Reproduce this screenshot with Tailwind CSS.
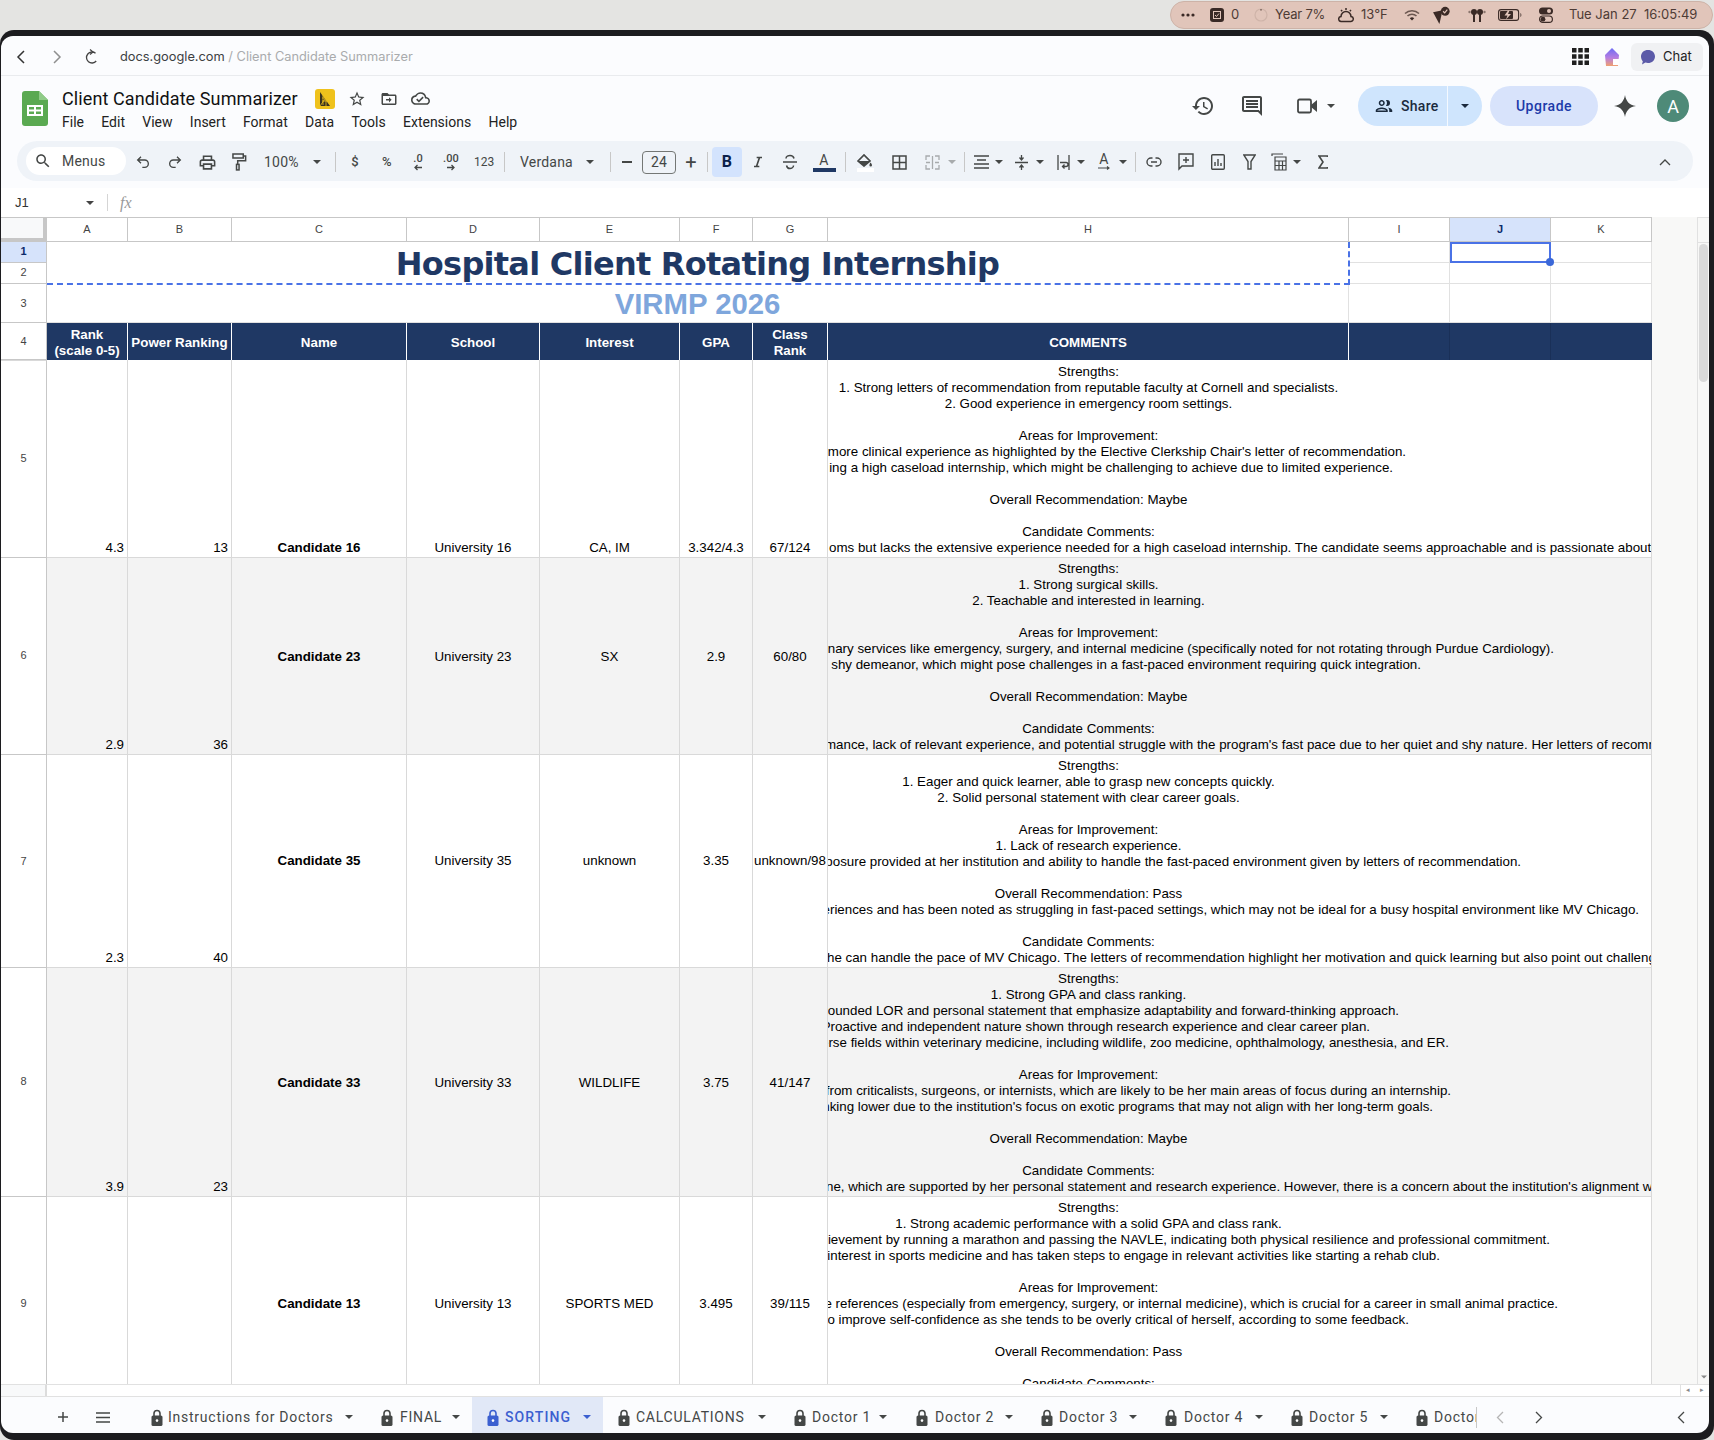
<!DOCTYPE html>
<html lang="en">
<head>
<meta charset="utf-8">
<title>Client Candidate Summarizer</title>
<script src="https://cdn.jsdelivr.net/npm/@tailwindcss/browser@4"></script>
</head>
<body class="w-[1714px] h-[1440px] overflow-hidden bg-[#e4e4e2] flex flex-col [font-family:'Liberation_Sans',Arial,sans-serif]">
<svg class="absolute w-0 h-0" aria-hidden="true">
  <symbol id="caret" viewBox="0 0 8 4"><path d="M0 0h8L4 4z" fill="currentColor"/></symbol>
  <symbol id="lock" viewBox="0 0 12 17"><path d="M3 7V4.500a3 3 0 0 1 6 0V7" fill="none" stroke="currentColor" stroke-width="1.600"/><rect x="0.500" y="6.500" width="11" height="10.500" rx="1.600" fill="currentColor"/><circle cx="6" cy="11.600" r="1.300" fill="#fff"/></symbol>
</svg>

<!-- macOS menu bar -->
<div class="h-[30px] shrink-0 flex justify-end">
  <div class="w-[543px] h-[28px] mt-[1px] mr-[1px] rounded-full bg-[#e1c5ba] border border-[#cdb3a8] flex items-center pl-[10px] text-[13px] text-[#4d3b35] [font-family:Inter,sans-serif] whitespace-nowrap">
    <svg class="w-[14px] h-[4px]" viewBox="0 0 14 4"><circle cx="2" cy="2" r="1.600" fill="#3a2a26"/><circle cx="7" cy="2" r="1.600" fill="#3a2a26"/><circle cx="12" cy="2" r="1.600" fill="#3a2a26"/></svg>
    <svg class="w-[14px] h-[14px] ml-[15px]" viewBox="0 0 14 14"><rect width="14" height="14" rx="3" fill="#3a2a26"/><rect x="3.500" y="3.500" width="7" height="7" fill="none" stroke="#e1c5ba"/><path d="M5 7l1.500 1.500L9 5.500" fill="none" stroke="#e1c5ba"/></svg>
    <span class="w-[9px] ml-[7px]">0</span>
    <svg class="w-[14px] h-[14px] ml-[14px]" viewBox="0 0 14 14"><circle cx="7" cy="7" r="6" fill="none" stroke="#cfb4a9" stroke-width="1.200"/><path d="M7 1v1.600" stroke="#4d3b35"/></svg>
    <span class="w-[49px] ml-[7px] tracking-[-0.2px]">Year 7%</span>
    <svg class="w-[16px] h-[16px] ml-[14px]" viewBox="0 0 16 16"><path d="M3.500 14.500h9a2.500 2.500 0 0 0 .5-5A5 5 0 0 0 3 9.500a2.500 2.500 0 0 0 .5 5zM8 1v2M3 3l1.200 1.200M13 3l-1.200 1.200" fill="none" stroke="#3a2a26" stroke-width="1.500"/></svg>
    <span class="w-[27px] ml-[7px]">13°F</span>
    <svg class="w-[16px] h-[12px] ml-[16px]" viewBox="0 0 16 12"><path d="M1 4.500a10 10 0 0 1 14 0M3.500 7a6.500 6.500 0 0 1 9 0" fill="none" stroke="#6b5750" stroke-width="1.500"/><path d="M5.800 9.200a3.200 3.200 0 0 1 4.400 0L8 11.500z" fill="#3a2a26"/></svg>
    <svg class="w-[19px] h-[19px] ml-[12px]" viewBox="0 0 18 18"><path d="M1 6l9-2-3 13z" fill="#3a2a26"/><circle cx="12.500" cy="5" r="4.200" fill="#3a2a26"/><path d="M10.500 5l1.500 1.500 2.500-3" fill="none" stroke="#e1c5ba" stroke-width="1.100"/></svg>
    <svg class="w-[18px] h-[14px] ml-[17px]" viewBox="0 0 18 14"><circle cx="6" cy="4" r="3" fill="#3a2a26"/><rect x="5" y="4" width="2" height="10" fill="#3a2a26"/><circle cx="12" cy="4" r="3" fill="#3a2a26"/><rect x="11" y="4" width="2" height="10" fill="#3a2a26"/><circle cx="1.500" cy="4" r="1.200" fill="#8a756d"/><circle cx="16.500" cy="4" r="1.200" fill="#8a756d"/></svg>
    <svg class="w-[24px] h-[12px] ml-[12px]" viewBox="0 0 24 12"><rect x="0.600" y="0.600" width="20" height="10.800" rx="2.500" fill="none" stroke="#3a2a26" stroke-width="1.100"/><rect x="2" y="2" width="13" height="8" rx="1" fill="#3a2a26"/><path d="M10 1.500L6.500 6.500h3L8 10.500l5-5.500h-3l1.500-3.500z" fill="#e1c5ba"/><path d="M22 4v4c1-.3 1.600-1 1.600-2S23 4.300 22 4z" fill="#8a756d"/></svg>
    <svg class="w-[14px] h-[16px] ml-[17px]" viewBox="0 0 14 16"><rect y="0.500" width="14" height="7" rx="3.500" fill="#3a2a26"/><circle cx="10" cy="4" r="2" fill="#e1c5ba"/><rect x="0.600" y="9" width="12.800" height="6.400" rx="3.200" fill="none" stroke="#3a2a26" stroke-width="1.200"/><circle cx="4" cy="12.200" r="2.400" fill="#3a2a26"/></svg>
    <span class="w-[66px] ml-[16px]">Tue Jan 27</span>
    <span class="ml-[9px]">16:05:49</span>
  </div>
</div>

<!-- window frame -->
<div class="flex-1 min-h-0 bg-[#1c1c1f] rounded-[14px] pt-[6px] pl-[1px] pr-[5px] pb-[7px]">
  <div class="h-full rounded-[12px] overflow-hidden bg-[#fbfcfe] flex flex-col text-[#1f1f1f]">

    <!-- browser bar -->
    <div class="h-[40px] pt-[2px] shrink-0 border-b border-[#e9ebee] flex items-center">
      <svg class="w-[10px] h-[14px] ml-[15px]" viewBox="0 0 10 14"><path d="M8 1L2 7l6 6" fill="none" stroke="#333" stroke-width="1.500"/></svg>
      <svg class="w-[10px] h-[14px] ml-[26px]" viewBox="0 0 10 14"><path d="M2 1l6 6-6 6" fill="none" stroke="#8f8f8f" stroke-width="1.500"/></svg>
      <svg class="w-[14px] h-[16px] ml-[23px]" viewBox="0 0 14 16"><path d="M7 3a5.500 5.500 0 1 0 5.500 5.500" fill="none" stroke="#444" stroke-width="1.300" transform="rotate(40 7 8.500)"/><path d="M5 .5l3 2.500-3 2.500" fill="none" stroke="#444" stroke-width="1.200"/></svg>
      <div class="ml-[21px] text-[12.8px] whitespace-nowrap [font-family:Inter,sans-serif]"><span class="text-[#3c4043]">docs.google.com</span><span class="text-[#a9abad]"> / Client Candidate Summarizer</span></div>
      <svg class="w-[17px] h-[17px] ml-auto" viewBox="0 0 17 17" fill="#1f1f1f"><rect width="4.500" height="4.500"/><rect x="6.250" width="4.500" height="4.500"/><rect x="12.500" width="4.500" height="4.500"/><rect y="6.250" width="4.500" height="4.500"/><rect x="6.250" y="6.250" width="4.500" height="4.500"/><rect x="12.500" y="6.250" width="4.500" height="4.500"/><rect y="12.500" width="4.500" height="4.500"/><rect x="6.250" y="12.500" width="4.500" height="4.500"/><rect x="12.500" y="12.500" width="4.500" height="4.500"/></svg>
      <svg class="w-[16px] h-[18px] ml-[15px]" viewBox="0 0 16 18"><defs><linearGradient id="gem" x1="0" y1="0" x2="0" y2="1"><stop offset="0" stop-color="#6d6cf5"/><stop offset=".55" stop-color="#b77ee0"/><stop offset="1" stop-color="#f0a070"/></linearGradient></defs><path d="M8 0l7 7-1 11H2L1 7z" fill="url(#gem)"/><rect x="9" y="11" width="6" height="6" fill="#fff"/></svg>
      <div class="w-[72px] h-[28px] ml-[11px] mr-[6px] rounded-[6px] bg-[#f0f1f3] flex items-center pl-[9px] text-[14px] [font-family:Inter,sans-serif]">
        <svg class="w-[16px] h-[16px]" viewBox="0 0 16 16"><path d="M8 1c4 0 7 2.700 7 6.500S12 14 8 14c-.9 0-1.800-.2-2.600-.4L2 15.500l.8-3.300C1.600 11 1 9.400 1 7.500 1 3.700 4 1 8 1z" fill="#5b5aa8"/></svg>
        <span class="ml-[7px] text-[13px]">Chat</span>
      </div>
    </div>

    <!-- title row -->
    <div class="h-[65px] shrink-0 flex items-center [font-family:Roboto,sans-serif]">
      <svg class="w-[26px] h-[35px] ml-[21px]" viewBox="0 0 26 35"><path d="M3 0h14l9 9v23a3 3 0 0 1-3 3H3a3 3 0 0 1-3-3V3a3 3 0 0 1 3-3z" fill="#5aa951"/><path d="M17 0l9 9h-9z" fill="#8fcb87"/><path d="M5 14h16v11H5z" fill="#fff"/><path d="M7 16h5v2.500H7zM14 16h5v2.500h-5zM7 20.500h5V23H7zM14 20.500h5V23h-5z" fill="#5aa951"/></svg>
      <div class="ml-[14px] flex flex-col">
        <div class="flex items-center h-[24px]">
          <span class="w-[253px] text-[18px] leading-[24px] tracking-[0.1px] whitespace-nowrap text-[#111]">Client Candidate Summarizer</span>
          <svg class="w-[20px] h-[20px]" viewBox="0 0 20 20"><rect width="20" height="20" rx="3" fill="#efc21c"/><path d="M5 3l10 14H5z" fill="#3a3320"/><path d="M7 9h6M7 12h8M8 6v10M11 9v8M15 3L5 17" stroke="#efc21c" stroke-width=".8" fill="none"/></svg>
          <svg class="w-[18px] h-[18px] ml-[13px]" viewBox="0 0 24 24" fill="#444746"><path d="M22 9.240l-7.190-.62L12 2 9.190 8.630 2 9.240l5.460 4.730L5.820 21 12 17.270 18.180 21l-1.630-7.030L22 9.240zM12 15.400l-3.760 2.270 1-4.280-3.320-2.880 4.380-.38L12 6.100l1.710 4.040 4.380.38-3.320 2.880 1 4.280L12 15.400z"/></svg>
          <svg class="w-[18px] h-[18px] ml-[14px]" viewBox="0 0 24 24" fill="#444746"><path d="M20 6h-8l-2-2H4c-1.100 0-2 .9-2 2v12c0 1.100.9 2 2 2h16c1.100 0 2-.9 2-2V8c0-1.100-.9-2-2-2zm0 12H4V8h16v10zM12 9.500l3.500 3.500-3.500 3.500v-2.500H8v-2h4V9.500z"/></svg>
          <svg class="w-[19px] h-[19px] ml-[13px]" viewBox="0 0 24 24" fill="#444746"><path d="M19.350 10.040A7.490 7.490 0 0 0 12 4C9.110 4 6.600 5.640 5.350 8.040A5.994 5.994 0 0 0 0 14c0 3.310 2.690 6 6 6h13c2.760 0 5-2.240 5-5 0-2.640-2.050-4.780-4.650-4.960zM19 18H6c-2.210 0-4-1.790-4-4 0-2.050 1.530-3.760 3.560-3.970l1.070-.11.500-.95A5.469 5.469 0 0 1 12 6c2.620 0 4.880 1.860 5.390 4.430l.3 1.500 1.530.11A2.980 2.980 0 0 1 22 15c0 1.650-1.350 3-3 3zm-9-3.820l-2.090-2.090L6.500 13.500 10 17l6.010-6.010-1.410-1.410z"/></svg>
        </div>
        <div class="flex h-[18px] mt-[2px] gap-[17.3px] text-[14px] leading-[18px] text-[#222] whitespace-nowrap">
          <span>File</span><span>Edit</span><span>View</span><span>Insert</span><span>Format</span><span>Data</span><span>Tools</span><span>Extensions</span><span>Help</span>
        </div>
      </div>
      <div class="ml-auto flex items-center pr-[20px] pb-[5px]">
        <svg class="w-[24px] h-[24px]" viewBox="0 0 24 24" fill="#444746"><path d="M13 3c-4.970 0-9 4.030-9 9H1l3.890 3.890.07.14L9 12H6c0-3.870 3.130-7 7-7s7 3.130 7 7-3.130 7-7 7c-1.930 0-3.680-.79-4.940-2.060l-1.420 1.420C8.270 19.990 10.510 21 13 21c4.970 0 9-4.030 9-9s-4.030-9-9-9zm-1 5v5l4.280 2.540.72-1.210-3.500-2.080V8H12z"/></svg>
        <svg class="w-[24px] h-[24px] ml-[25px]" viewBox="0 0 24 24" fill="#444746"><path d="M21.990 4c0-1.100-.89-2-1.990-2H4c-1.100 0-2 .9-2 2v12c0 1.100.9 2 2 2h14l4 4-.01-18zM20 4v13.170L18.830 16H4V4h16zM6 12h12v2H6zm0-3h12v2H6zm0-3h12v2H6z"/></svg>
        <svg class="w-[24px] h-[24px] ml-[31px]" viewBox="0 0 24 24"><path d="M4.500 5.500h10a1.500 1.500 0 0 1 1.500 1.500v10a1.500 1.500 0 0 1-1.500 1.500h-10A1.500 1.500 0 0 1 3 17V7a1.500 1.500 0 0 1 1.500-1.500z" fill="none" stroke="#444746" stroke-width="1.800"/><path d="M22 6l-6 5v2l6 5z" fill="#444746"/></svg>
        <svg class="w-[8px] h-[4px] ml-[8px] text-[#444746]"><use href="#caret"/></svg>
        <div class="w-[124px] h-[40px] ml-[23px] rounded-full bg-[#cfe5fd] flex text-[#1b2a3d]">
          <div class="w-[90px] flex items-center pl-[17px] border-r border-[#f4f9ff]">
            <svg class="w-[18px] h-[18px]" viewBox="0 0 24 24" fill="#1b2a3d"><path d="M9 12c2.200 0 4-1.800 4-4s-1.800-4-4-4-4 1.800-4 4 1.800 4 4 4zm0-6c1.100 0 2 .9 2 2s-.9 2-2 2-2-.9-2-2 .9-2 2-2zm0 8c-2.700 0-8 1.300-8 4v2h16v-2c0-2.700-5.300-4-8-4zm-6 4c.2-.7 3.300-2 6-2s5.800 1.300 6 2H3zm13-6a4 4 0 0 0 0-8c-.5 0-1 .1-1.400.3.900 1 1.400 2.300 1.400 3.700s-.5 2.700-1.400 3.700c.4.200.9.300 1.400.3zm1 2c1.300 1 2 2.200 2 4v2h4v-2c0-2.100-3.200-3.400-6-4z"/></svg>
            <span class="ml-[8px] text-[14px] font-medium tracking-[0.3px]">Share</span>
          </div>
          <div class="flex-1 flex items-center justify-center"><svg class="w-[8px] h-[4px]"><use href="#caret"/></svg></div>
        </div>
        <div class="w-[108px] h-[40px] ml-[8px] rounded-full bg-[#d8e3fb] flex items-center justify-center text-[14px] font-medium tracking-[0.5px] text-[#1c3aa9]">Upgrade</div>
        <svg class="w-[22px] h-[22px] ml-[16px]" viewBox="0 0 22 22"><path d="M11 0c1 6 4 10 11 11-7 1-10 5-11 11-1-6-4-10-11-11 7-1 10-5 11-11z" fill="#444746"/></svg>
        <div class="w-[32px] h-[32px] ml-[21px] rounded-full bg-[#4e8a78] text-white text-[18px] flex items-center justify-center">A</div>
      </div>
    </div>

    <!-- toolbar -->
    <div class="h-[40px] pt-[2px] shrink-0 mx-[16px] rounded-full bg-[#eff3f8] flex items-center pl-[9px] text-[#444746] tracking-[0.2px] [font-family:Roboto,sans-serif] whitespace-nowrap">
      <div class="w-[100px] h-[28px] -mt-[2px] rounded-full bg-white flex items-center pl-[8px] text-[14px]">
        <svg class="w-[18px] h-[18px]" viewBox="0 0 24 24" fill="#444746"><path d="M15.500 14h-.79l-.28-.27C15.410 12.590 16 11.110 16 9.500 16 5.910 13.090 3 9.500 3S3 5.910 3 9.500 5.910 16 9.500 16c1.610 0 3.090-.59 4.230-1.570l.27.280v.79l5 4.990L20.490 19l-4.990-5zm-6 0C7.010 14 5 11.990 5 9.500S7.010 5 9.500 5 14 7.010 14 9.500 11.990 14 9.500 14z"/></svg>
        <span class="ml-[10px]">Menus</span>
      </div>
      <span class="w-[34px] flex justify-center"><svg class="w-[16px] h-[16px]" viewBox="0 0 24 24"><path d="M9 14L4 9l5-5M4 9h10.500a5.500 5.500 0 0 1 0 11H11" fill="none" stroke="#444746" stroke-width="2"/></svg></span>
      <span class="w-[29px] flex justify-center"><svg class="w-[16px] h-[16px]" viewBox="0 0 24 24"><path d="M15 14l5-5-5-5M20 9H9.500a5.500 5.500 0 0 0 0 11H13" fill="none" stroke="#444746" stroke-width="2"/></svg></span>
      <span class="w-[36px] flex justify-center"><svg class="w-[19px] h-[19px]" viewBox="0 0 24 24" fill="#444746"><path d="M19 8h-1V3H6v5H5c-1.660 0-3 1.340-3 3v6h4v4h12v-4h4v-6c0-1.660-1.340-3-3-3zM8 5h8v3H8V5zm8 12v2H8v-4h8v2zm2-2v-2H6v2H4v-4c0-.55.45-1 1-1h14c.55 0 1 .45 1 1v4h-2z"/></svg></span>
      <span class="w-[26px] flex justify-center"><svg class="w-[19px] h-[20px]" viewBox="0 0 24 24"><path d="M5 2h13v5H5zM18 4.500h3v6h-10v4" fill="none" stroke="#444746" stroke-width="1.900"/><rect x="9.500" y="15" width="3.200" height="7" fill="none" stroke="#444746" stroke-width="1.900"/></svg></span>
      <span class="w-[57px] pl-[13px] text-[14px]">100%</span>
      <span class="w-[18px] flex justify-center"><svg class="w-[8px] h-[4px]"><use href="#caret"/></svg></span>
      <span class="w-[19px] flex justify-center"><span class="w-px h-[20px] bg-[#c7c7c7]"></span></span>
      <span class="w-[20px] text-center text-[13px] font-medium">$</span>
      <span class="w-[44px] text-center text-[13px] font-medium">%</span>
      <span class="w-[18px] flex flex-col items-center text-[11px] leading-[11px] font-medium">.0<svg class="w-[10px] h-[7px]" viewBox="0 0 10 7"><path d="M9 3.500H2M4.500 1L2 3.500 4.500 6" fill="none" stroke="#444746" stroke-width="1.300"/></svg></span>
      <span class="w-[48px] flex flex-col items-center text-[11px] leading-[11px] font-medium">.00<svg class="w-[10px] h-[7px]" viewBox="0 0 10 7"><path d="M1 3.500h7M5.500 1L8 3.500 5.500 6" fill="none" stroke="#444746" stroke-width="1.300"/></svg></span>
      <span class="w-[18px] flex justify-center text-[12px] tracking-normal">123</span>
      <span class="w-[23px] flex justify-center"><span class="w-px h-[20px] bg-[#c7c7c7]"></span></span>
      <span class="w-[62px] pl-[4px] text-[14px]">Verdana</span>
      <span class="w-[24px] flex justify-center"><svg class="w-[8px] h-[4px]"><use href="#caret"/></svg></span>
      <span class="w-[16px] flex justify-center"><span class="w-px h-[20px] bg-[#c7c7c7]"></span></span>
      <span class="w-[18px] flex justify-center"><span class="w-[10px] h-[2px] bg-[#444746]"></span></span>
      <span class="w-[34px] h-[23px] ml-[6px] rounded-[4px] border border-[#747775] flex items-center justify-center text-[14px]">24</span>
      <span class="w-[30px] flex justify-center text-[20px] leading-none">+</span>
      <span class="w-[2px] flex justify-center"><span class="w-px h-[20px] shrink-0 bg-[#c7c7c7]"></span></span>
      <span class="w-[30px] h-[30px] ml-[4px] rounded-[4px] bg-[#d3e3fd] flex items-center justify-center text-[16px] font-bold text-[#0b1f4b]">B</span>
      <span class="w-[32px] flex justify-center"><svg class="w-[16px] h-[16px]" viewBox="0 0 24 24" fill="#444746"><path d="M10 4v2.500h2.600l-3.800 11H6V20h8v-2.500h-2.600l3.800-11H18V4z"/></svg></span>
      <span class="w-[32px] flex justify-center"><svg class="w-[16px] h-[16px]" viewBox="0 0 16 16"><path d="M12 4.500c-.4-2-2.500-3-4-3s-4 1-4 3M1 8h14M4.500 11.500c.4 2 2 3 3.500 3s3.500-1 3.500-3" fill="none" stroke="#444746" stroke-width="1.500"/></svg></span>
      <span class="w-[36px] flex flex-col items-center text-[14px] leading-[14px]"><span>A</span><span class="w-[23px] h-[4px] mt-[1px] bg-[#1f3864]"></span></span>
      <span class="w-[6px] flex justify-center"><span class="w-px h-[20px] shrink-0 bg-[#c7c7c7]"></span></span>
      <span class="w-[34px] flex flex-col items-center"><svg class="w-[16px] h-[14px]" viewBox="0 0 16 14"><path d="M1 8l6-6 6 6-6 5z" fill="none" stroke="#444746" stroke-width="1.700"/><path d="M1 8h12l-6 5zM13.500 9.500c1 1.300 1.500 2 1.500 2.700a1.300 1.300 0 0 1-2.600 0c0-.7.5-1.400 1.100-2.700z" fill="#444746"/></svg><span class="w-[17px] h-[4px] mt-[1px] bg-white"></span></span>
      <span class="w-[34px] flex justify-center"><svg class="w-[15px] h-[15px]" viewBox="0 0 15 15"><path d="M1 1h13v13H1zM7.500 1v13M1 7.500h13" fill="none" stroke="#444746" stroke-width="1.500"/></svg></span>
      <span class="w-[32px] flex justify-center"><svg class="w-[15px] h-[15px]" viewBox="0 0 15 15"><path d="M1 5V1h4M10 1h4v4M1 10v4h4M10 14h4v-4M1 7.500h4M14 7.500h-4M7.500 1v13" fill="none" stroke="#a8abad" stroke-width="1.300"/></svg></span>
      <span class="w-[8px] flex justify-center text-[#a8abad]"><svg class="w-[8px] h-[4px] shrink-0"><use href="#caret"/></svg></span>
      <span class="w-[16px] flex justify-center"><span class="w-px h-[20px] bg-[#c7c7c7]"></span></span>
      <span class="w-[18px] flex justify-center"><svg class="w-[15px] h-[14px] shrink-0" viewBox="0 0 15 14"><path d="M0 1h15M3 5h9M0 9h15M0 13h15" stroke="#444746" stroke-width="1.700"/></svg></span>
      <span class="w-[18px] flex justify-center"><svg class="w-[8px] h-[4px]"><use href="#caret"/></svg></span>
      <span class="w-[26px] flex justify-center"><svg class="w-[13px] h-[17px]" viewBox="0 0 13 17"><path d="M0 8.500h13M6.500 1v4M4.500 3.500l2 2.500 2-2.500M6.500 16v-4M4.500 13.500l2-2.500 2 2.500" fill="none" stroke="#444746" stroke-width="1.300"/></svg></span>
      <span class="w-[12px] flex justify-center"><svg class="w-[8px] h-[4px]"><use href="#caret"/></svg></span>
      <span class="w-[34px] flex justify-center"><svg class="w-[13px] h-[15px]" viewBox="0 0 13 15"><path d="M1 0v15M12 0v15M3 7.500h6a1.500 1.500 0 0 1 0 4H6M7.500 9.500l-2 2 2 2" fill="none" stroke="#444746" stroke-width="1.300"/></svg></span>
      <span class="w-[2px] flex justify-center"><svg class="w-[8px] h-[4px] shrink-0"><use href="#caret"/></svg></span>
      <span class="w-[36px] ml-[4px] flex flex-col items-center text-[14px] leading-[13px]">A<svg class="w-[14px] h-[5px] shrink-0" viewBox="0 0 14 5"><path d="M1 2h11M10 .5l2 1.500-2 1.500" fill="none" stroke="#444746" stroke-width="1.100"/></svg></span>
      <span class="w-[2px] flex justify-center"><svg class="w-[8px] h-[4px] shrink-0"><use href="#caret"/></svg></span>
      <span class="w-[22px] flex justify-center"><span class="w-px h-[20px] shrink-0 bg-[#c7c7c7]"></span></span>
      <span class="w-[15px] flex justify-center"><svg class="w-[16px] h-[10px] shrink-0" viewBox="0 0 16 10"><path d="M6.500 1H5a4 4 0 0 0 0 8h1.500M9.500 1H11a4 4 0 0 1 0 8H9.500M5 5h6" fill="none" stroke="#444746" stroke-width="1.400"/></svg></span>
      <span class="w-[49px] flex justify-center"><svg class="w-[16px] h-[18px] shrink-0" viewBox="0 0 16 18"><path d="M1 1h14v12H4l-3 3zM8 4v6M5 7h6" fill="none" stroke="#444746" stroke-width="1.400"/></svg></span>
      <span class="w-[16px] flex justify-center"><svg class="w-[14px] h-[16px] shrink-0" viewBox="0 0 14 16"><rect x="0.700" y="0.700" width="12.600" height="14.600" rx="1" fill="none" stroke="#444746" stroke-width="1.400"/><path d="M4 8v4M7 5v7M10 9v3" stroke="#444746" stroke-width="1.400"/></svg></span>
      <span class="w-[47px] flex justify-center"><svg class="w-[13px] h-[16px] shrink-0" viewBox="0 0 13 16"><path d="M0.800 1h11.400L8 7.500V15H5V7.500z" fill="none" stroke="#444746" stroke-width="1.400"/></svg></span>
      <span class="w-[12px] flex justify-center"><svg class="w-[16px] h-[18px] shrink-0" viewBox="0 0 16 18"><path d="M1 3V1h11M4 4h11v13H4zM4 8h11M8 8v9M11.500 8v9M4 12.500h11" fill="none" stroke="#444746" stroke-width="1.200"/></svg></span>
      <span class="w-[24px] flex justify-center"><svg class="w-[8px] h-[4px] shrink-0"><use href="#caret"/></svg></span>
      <span class="w-[28px] flex justify-center"><svg class="w-[10px] h-[14px] shrink-0" viewBox="0 0 10 14"><path d="M9.500 2V1H1l4 6-4 6h8.500v-1" fill="none" stroke="#444746" stroke-width="1.600"/></svg></span>
      <span class="ml-auto mr-[22px] flex"><svg class="w-[12px] h-[7px]" viewBox="0 0 12 7"><path d="M1 6l5-5 5 5" fill="none" stroke="#444746" stroke-width="1.300"/></svg></span>
    </div>

    <!-- formula bar -->
    <div class="h-[29px] mt-[7px] shrink-0 bg-white flex items-center text-[13px] text-[#333]">
      <span class="w-[85px] pl-[14px]">J1</span>
      <svg class="w-[8px] h-[4px] text-[#444]"><use href="#caret"/></svg>
      <span class="w-px h-[17px] ml-[13px] bg-[#d5d5d5]"></span>
      <span class="ml-[12px] italic text-[16px] text-[#999] [font-family:'Liberation_Serif',serif]">fx</span>
    </div>

    <!-- sheet -->
    <div class="h-[1167px] shrink-0 flex overflow-hidden bg-white text-[13.33px] leading-[16px] text-black">
      <div class="grid grid-cols-[46px_81px_104px_175px_133px_140px_73px_75px_521px_101px_101px_101px] grid-rows-[25px_21px_21px_39px_37px_198px_197px_213px_229px_214px] shrink-0">

        <!-- column headers -->
        <div class="bg-[#f8f9fa] border-t border-r-4 border-b-4 border-[#c7c7c7]"></div>
        <div class="border-t border-r border-b border-[#c7c7c7] flex items-center justify-center pb-[2px] text-[11px] text-[#444]">A</div>
        <div class="border-t border-r border-b border-[#c7c7c7] flex items-center justify-center pb-[2px] text-[11px] text-[#444]">B</div>
        <div class="border-t border-r border-b border-[#c7c7c7] flex items-center justify-center pb-[2px] text-[11px] text-[#444]">C</div>
        <div class="border-t border-r border-b border-[#c7c7c7] flex items-center justify-center pb-[2px] text-[11px] text-[#444]">D</div>
        <div class="border-t border-r border-b border-[#c7c7c7] flex items-center justify-center pb-[2px] text-[11px] text-[#444]">E</div>
        <div class="border-t border-r border-b border-[#c7c7c7] flex items-center justify-center pb-[2px] text-[11px] text-[#444]">F</div>
        <div class="border-t border-r border-b border-[#c7c7c7] flex items-center justify-center pb-[2px] text-[11px] text-[#444]">G</div>
        <div class="border-t border-r border-b border-[#c7c7c7] flex items-center justify-center pb-[2px] text-[11px] text-[#444]">H</div>
        <div class="border-t border-r border-b border-[#c7c7c7] flex items-center justify-center pb-[2px] text-[11px] text-[#444]">I</div>
        <div class="border-t border-r border-b border-[#c7c7c7] bg-[#d6e3fb] flex items-center justify-center pb-[2px] text-[11px] font-bold text-[#0b2a6b]">J</div>
        <div class="border-t border-r border-b border-[#c7c7c7] flex items-center justify-center pb-[2px] text-[11px] text-[#444]">K</div>

        <!-- rows 1-2 -->
        <div class="bg-[#d6e3fb] border-r border-b border-[#c7c7c7] flex items-center justify-center pb-[2px] text-[11px] font-bold text-[#0b2a6b]">1</div>
        <div class="col-span-8 row-span-2 relative z-10 -mb-px -mr-px pt-[2px] border-r-2 border-b-2 border-dashed border-[#4a72e6] flex items-center justify-center text-[#1f3864] text-[32px] font-bold [font-family:'DejaVu_Sans',sans-serif] tracking-[-0.75px] whitespace-nowrap">Hospital Client Rotating Internship</div>
        <div class="border-r border-b border-[#e1e1e1]"></div>
        <div class="relative border-2 border-[#4a72e6]"><span class="absolute -right-[5px] -bottom-[5px] w-[8px] h-[8px] rounded-full bg-[#3b68d8] z-10"></span></div>
        <div class="border-r border-b border-[#e1e1e1]"></div>

        <div class="border-r border-b border-[#c7c7c7] flex items-center justify-center pb-[2px] text-[11px] text-[#444]">2</div>
        <div class="border-r border-b border-[#e1e1e1]"></div>
        <div class="border-r border-b border-[#e1e1e1]"></div>
        <div class="border-r border-b border-[#e1e1e1]"></div>

        <!-- row 3 -->
        <div class="border-r border-b border-[#c7c7c7] flex items-center justify-center text-[11px] text-[#444]">3</div>
        <div class="col-span-8 pt-[2px] border-r border-b border-[#e1e1e1] flex items-center justify-center text-[#7ea6dc] text-[29.33px] font-bold">VIRMP 2026</div>
        <div class="border-r border-b border-[#e1e1e1]"></div>
        <div class="border-r border-b border-[#e1e1e1]"></div>
        <div class="border-r border-b border-[#e1e1e1]"></div>

        <!-- row 4 -->
        <div class="border-r border-b border-[#c7c7c7] flex items-center justify-center text-[11px] text-[#444]">4</div>
        <div class="bg-[#1f3864] pt-[2px] border-r border-white text-white font-bold flex items-center justify-center text-center">Rank<br>(scale 0-5)</div>
        <div class="bg-[#1f3864] pt-[2px] border-r border-white text-white font-bold flex items-center justify-center text-center whitespace-nowrap">Power Ranking</div>
        <div class="bg-[#1f3864] pt-[2px] border-r border-white text-white font-bold flex items-center justify-center text-center">Name</div>
        <div class="bg-[#1f3864] pt-[2px] border-r border-white text-white font-bold flex items-center justify-center text-center">School</div>
        <div class="bg-[#1f3864] pt-[2px] border-r border-white text-white font-bold flex items-center justify-center text-center">Interest</div>
        <div class="bg-[#1f3864] pt-[2px] border-r border-white text-white font-bold flex items-center justify-center text-center">GPA</div>
        <div class="bg-[#1f3864] pt-[2px] border-r border-white text-white font-bold flex items-center justify-center text-center">Class<br>Rank</div>
        <div class="bg-[#1f3864] pt-[2px] border-r border-white text-white font-bold flex items-center justify-center text-center">COMMENTS</div>
        <div class="bg-[#1f3864] border-r border-[#1a3058]"></div>
        <div class="bg-[#1f3864] border-r border-[#1a3058]"></div>
        <div class="bg-[#1f3864]"></div>

        <!-- row 5 -->
        <div class="border-t border-r border-b border-t-[#d9d9d9] border-[#c7c7c7] flex items-center justify-center pb-[2px] text-[11px] text-[#444]">5</div>
        <div class="border-r border-b border-[#d9d9d9] flex items-end justify-end pr-[3px] pb-[1px]">4.3</div>
        <div class="border-r border-b border-[#d9d9d9] flex items-end justify-end pr-[3px] pb-[1px]">13</div>
        <div class="border-r border-b border-[#d9d9d9] flex items-end justify-center pb-[1px] font-bold">Candidate 16</div>
        <div class="border-r border-b border-[#d9d9d9] flex items-end justify-center pb-[1px]">University 16</div>
        <div class="border-r border-b border-[#d9d9d9] flex items-end justify-center pb-[1px]">CA, IM</div>
        <div class="border-r border-b border-[#d9d9d9] flex items-end justify-center pb-[1px]">3.342/4.3</div>
        <div class="border-r border-b border-[#d9d9d9] flex items-end justify-center pb-[1px]">67/124</div>
        <div class="col-span-4 border-r border-b border-[#d9d9d9] overflow-hidden whitespace-nowrap pt-[4px]">
          <p class="w-[521px] text-center">Strengths:</p>
          <p class="w-[521px] flex justify-center">1. Strong letters of recommendation from reputable faculty at Cornell and specialists.</p>
          <p class="w-[521px] text-center">2. Good experience in emergency room settings.</p>
          <p class="h-[16px]"></p>
          <p class="w-[521px] text-center">Areas for Improvement:</p>
          <p class="flex justify-end pr-[245px]">Needs more clinical experience as highlighted by the Elective Clerkship Chair's letter of recommendation.</p>
          <p class="flex justify-end pr-[258px]">ing a high caseload internship, which might be challenging to achieve due to limited experience.</p>
          <p class="h-[16px]"></p>
          <p class="w-[521px] text-center">Overall Recommendation: Maybe</p>
          <p class="h-[16px]"></p>
          <p class="w-[521px] text-center">Candidate Comments:</p>
          <p class="pl-[1px]">oms but lacks the extensive experience needed for a high caseload internship. The candidate seems approachable and is passionate about</p>
        </div>

        <!-- row 6 -->
        <div class="border-r border-b border-[#c7c7c7] flex items-center justify-center pb-[2px] text-[11px] text-[#444]">6</div>
        <div class="bg-[#f3f3f3] border-r border-b border-[#d9d9d9] flex items-end justify-end pr-[3px] pb-[1px]">2.9</div>
        <div class="bg-[#f3f3f3] border-r border-b border-[#d9d9d9] flex items-end justify-end pr-[3px] pb-[1px]">36</div>
        <div class="bg-[#f3f3f3] border-r border-b border-[#d9d9d9] flex items-center justify-center pt-[2px] font-bold">Candidate 23</div>
        <div class="bg-[#f3f3f3] border-r border-b border-[#d9d9d9] flex items-center justify-center pt-[2px]">University 23</div>
        <div class="bg-[#f3f3f3] border-r border-b border-[#d9d9d9] flex items-center justify-center pt-[2px]">SX</div>
        <div class="bg-[#f3f3f3] border-r border-b border-[#d9d9d9] flex items-center justify-center pt-[2px]">2.9</div>
        <div class="bg-[#f3f3f3] border-r border-b border-[#d9d9d9] flex items-center justify-center pt-[2px]">60/80</div>
        <div class="col-span-4 bg-[#f3f3f3] border-r border-b border-[#d9d9d9] overflow-hidden whitespace-nowrap pt-[3px]">
          <p class="w-[521px] text-center">Strengths:</p>
          <p class="w-[521px] text-center">1. Strong surgical skills.</p>
          <p class="w-[521px] text-center">2. Teachable and interested in learning.</p>
          <p class="h-[16px]"></p>
          <p class="w-[521px] text-center">Areas for Improvement:</p>
          <p class="flex justify-end pr-[97px]">Limited exposure to veterinary services like emergency, surgery, and internal medicine (specifically noted for not rotating through Purdue Cardiology).</p>
          <p class="flex justify-end pr-[230px]">Quiet and shy demeanor, which might pose challenges in a fast-paced environment requiring quick integration.</p>
          <p class="h-[16px]"></p>
          <p class="w-[521px] text-center">Overall Recommendation: Maybe</p>
          <p class="h-[16px]"></p>
          <p class="w-[521px] text-center">Candidate Comments:</p>
          <p class="ml-[-3px]">mance, lack of relevant experience, and potential struggle with the program's fast pace due to her quiet and shy nature. Her letters of recommendation</p>
        </div>

        <!-- row 7 -->
        <div class="border-r border-b border-[#c7c7c7] flex items-center justify-center text-[11px] text-[#444]">7</div>
        <div class="border-r border-b border-[#d9d9d9] flex items-end justify-end pr-[3px] pb-[1px]">2.3</div>
        <div class="border-r border-b border-[#d9d9d9] flex items-end justify-end pr-[3px] pb-[1px]">40</div>
        <div class="border-r border-b border-[#d9d9d9] flex items-center justify-center font-bold">Candidate 35</div>
        <div class="border-r border-b border-[#d9d9d9] flex items-center justify-center">University 35</div>
        <div class="border-r border-b border-[#d9d9d9] flex items-center justify-center">unknown</div>
        <div class="border-r border-b border-[#d9d9d9] flex items-center justify-center">3.35</div>
        <div class="border-r border-b border-[#d9d9d9] flex items-center justify-center whitespace-nowrap">unknown/98</div>
        <div class="col-span-4 border-r border-b border-[#d9d9d9] overflow-hidden whitespace-nowrap pt-[3px]">
          <p class="w-[521px] text-center">Strengths:</p>
          <p class="w-[521px] text-center">1. Eager and quick learner, able to grasp new concepts quickly.</p>
          <p class="w-[521px] text-center">2. Solid personal statement with clear career goals.</p>
          <p class="h-[16px]"></p>
          <p class="w-[521px] text-center">Areas for Improvement:</p>
          <p class="w-[521px] text-center">1. Lack of research experience.</p>
          <p class="flex justify-end pr-[130px]">Limited exposure provided at her institution and ability to handle the fast-paced environment given by letters of recommendation.</p>
          <p class="h-[16px]"></p>
          <p class="w-[521px] text-center">Overall Recommendation: Pass</p>
          <p class="flex justify-end pr-[12px]">Limited experiences and has been noted as struggling in fast-paced settings, which may not be ideal for a busy hospital environment like MV Chicago.</p>
          <p class="h-[16px]"></p>
          <p class="w-[521px] text-center">Candidate Comments:</p>
          <p class="ml-[-1px]">he can handle the pace of MV Chicago. The letters of recommendation highlight her motivation and quick learning but also point out challenges</p>
        </div>

        <!-- row 8 -->
        <div class="border-r border-b border-[#c7c7c7] flex items-center justify-center pb-[2px] text-[11px] text-[#444]">8</div>
        <div class="bg-[#f3f3f3] border-r border-b border-[#d9d9d9] flex items-end justify-end pr-[3px] pb-[1px]">3.9</div>
        <div class="bg-[#f3f3f3] border-r border-b border-[#d9d9d9] flex items-end justify-end pr-[3px] pb-[1px]">23</div>
        <div class="bg-[#f3f3f3] border-r border-b border-[#d9d9d9] flex items-center justify-center pt-[2px] font-bold">Candidate 33</div>
        <div class="bg-[#f3f3f3] border-r border-b border-[#d9d9d9] flex items-center justify-center pt-[2px]">University 33</div>
        <div class="bg-[#f3f3f3] border-r border-b border-[#d9d9d9] flex items-center justify-center pt-[2px]">WILDLIFE</div>
        <div class="bg-[#f3f3f3] border-r border-b border-[#d9d9d9] flex items-center justify-center pt-[2px]">3.75</div>
        <div class="bg-[#f3f3f3] border-r border-b border-[#d9d9d9] flex items-center justify-center pt-[2px]">41/147</div>
        <div class="col-span-4 bg-[#f3f3f3] border-r border-b border-[#d9d9d9] overflow-hidden whitespace-nowrap pt-[3px]">
          <p class="w-[521px] text-center">Strengths:</p>
          <p class="w-[521px] text-center">1. Strong GPA and class ranking.</p>
          <p class="flex justify-end pr-[252px]">2. Well-rounded LOR and personal statement that emphasize adaptability and forward-thinking approach.</p>
          <p class="flex justify-end pr-[281px]">3. Proactive and independent nature shown through research experience and clear career plan.</p>
          <p class="flex justify-end pr-[202px]">4. Interest in diverse fields within veterinary medicine, including wildlife, zoo medicine, ophthalmology, anesthesia, and ER.</p>
          <p class="h-[16px]"></p>
          <p class="w-[521px] text-center">Areas for Improvement:</p>
          <p class="flex justify-end pr-[200px]">Limited experience from criticalists, surgeons, or internists, which are likely to be her main areas of focus during an internship.</p>
          <p class="flex justify-end pr-[218px]">Class ranking lower due to the institution's focus on exotic programs that may not align with her long-term goals.</p>
          <p class="h-[16px]"></p>
          <p class="w-[521px] text-center">Overall Recommendation: Maybe</p>
          <p class="h-[16px]"></p>
          <p class="w-[521px] text-center">Candidate Comments:</p>
          <p class="ml-[-2px]">ne, which are supported by her personal statement and research experience. However, there is a concern about the institution's alignment with</p>
        </div>

        <!-- row 9 -->
        <div class="border-r border-b border-[#c7c7c7] flex items-center justify-center pb-[2px] text-[11px] text-[#444]">9</div>
        <div class="border-r border-b border-[#d9d9d9]"></div>
        <div class="border-r border-b border-[#d9d9d9]"></div>
        <div class="border-r border-b border-[#d9d9d9] flex items-center justify-center font-bold">Candidate 13</div>
        <div class="border-r border-b border-[#d9d9d9] flex items-center justify-center">University 13</div>
        <div class="border-r border-b border-[#d9d9d9] flex items-center justify-center">SPORTS MED</div>
        <div class="border-r border-b border-[#d9d9d9] flex items-center justify-center">3.495</div>
        <div class="border-r border-b border-[#d9d9d9] flex items-center justify-center">39/115</div>
        <div class="col-span-4 border-r border-b border-[#d9d9d9] overflow-hidden whitespace-nowrap pt-[3px]">
          <p class="w-[521px] text-center">Strengths:</p>
          <p class="w-[521px] text-center">1. Strong academic performance with a solid GPA and class rank.</p>
          <p class="flex justify-end pr-[101px]">2. Demonstrated achievement by running a marathon and passing the NAVLE, indicating both physical resilience and professional commitment.</p>
          <p class="flex justify-end pr-[211px]">3. Has a strong interest in sports medicine and has taken steps to engage in relevant activities like starting a rehab club.</p>
          <p class="h-[16px]"></p>
          <p class="w-[521px] text-center">Areas for Improvement:</p>
          <p class="flex justify-end pr-[93px]">1. Needs more references (especially from emergency, surgery, or internal medicine), which is crucial for a career in small animal practice.</p>
          <p class="flex justify-end pr-[242px]">2. Needs to improve self-confidence as she tends to be overly critical of herself, according to some feedback.</p>
          <p class="h-[16px]"></p>
          <p class="w-[521px] text-center">Overall Recommendation: Pass</p>
          <p class="h-[16px]"></p>
          <p class="w-[521px] text-center">Candidate Comments:</p>
        </div>
      </div>

      <!-- gutter -->
      <div class="w-[45px] shrink-0 bg-[#f8f8f7]"></div>
      <!-- vertical scrollbar -->
      <div class="flex-1 bg-[#f8f8f7] border-l border-t border-[#e1e1e1] flex flex-col">
        <div class="h-[25px] shrink-0 border-b border-[#e1e1e1]"></div>
        <div class="w-[9px] h-[138px] mt-[1px] ml-[1px] rounded-full bg-[#dadada]"></div>
        <svg class="w-[6px] h-[4px] mt-auto mb-[5px] ml-[3px] text-[#888]"><use href="#caret"/></svg>
      </div>
    </div>

    <!-- horizontal scrollbar -->
    <div class="h-[13px] shrink-0 border-t border-b border-[#e1e1e1] bg-white flex items-center">
      <div class="w-[46px] h-full bg-[#f8f9fa] border-r-2 border-[#dcdcdc]"></div>
      <div class="ml-auto w-[29px] h-full flex items-center border-l border-[#e1e1e1] text-[#888] text-[7px] justify-around"><span>◂</span><span>▸</span></div>
    </div>

    <!-- tab bar -->
    <div class="flex-1 min-h-0 pt-[4px] flex items-center text-[14px] tracking-[0.75px] text-[#444746] [font-family:Roboto,sans-serif] whitespace-nowrap">
      <svg class="w-[12px] h-[12px] ml-[56px]" viewBox="0 0 12 12"><path d="M6 1v10M1 6h10" stroke="#444746" stroke-width="1.500"/></svg>
      <svg class="w-[14px] h-[11px] ml-[27px]" viewBox="0 0 14 11"><path d="M0 1h14M0 5.500h14M0 10h14" stroke="#444746" stroke-width="1.400"/></svg>
      <svg class="w-[12px] h-[17px] ml-[41px]"><use href="#lock"/></svg>
      <span class="w-[166px] ml-[5px]">Instructions for Doctors</span>
      <svg class="w-[8px] h-[4px] ml-[11px]"><use href="#caret"/></svg>
      <svg class="w-[12px] h-[17px] ml-[28px]"><use href="#lock"/></svg>
      <span class="w-[40px] ml-[7px]">FINAL</span>
      <svg class="w-[8px] h-[4px] ml-[12px]"><use href="#caret"/></svg>
      <div class="w-[131px] h-[36px] -mt-[4px] ml-[12px] bg-[#e1e8f7] flex items-center pt-[4px] text-[#3b5fd0] font-medium tracking-[1.1px]">
        <svg class="w-[12px] h-[17px] ml-[15px]"><use href="#lock"/></svg>
        <span class="w-[66px] ml-[6px]">SORTING</span>
        <svg class="w-[8px] h-[4px] ml-[12px]"><use href="#caret"/></svg>
      </div>
      <svg class="w-[12px] h-[17px] ml-[15px]"><use href="#lock"/></svg>
      <span class="w-[110px] ml-[6px]">CALCULATIONS</span>
      <svg class="w-[8px] h-[4px] ml-[12px]"><use href="#caret"/></svg>
      <svg class="w-[12px] h-[17px] ml-[28px]"><use href="#lock"/></svg>
      <span class="w-[56px] ml-[6px]">Doctor 1</span>
      <svg class="w-[8px] h-[4px] ml-[11px]"><use href="#caret"/></svg>
      <svg class="w-[12px] h-[17px] ml-[29px]"><use href="#lock"/></svg>
      <span class="w-[58px] ml-[7px]">Doctor 2</span>
      <svg class="w-[8px] h-[4px] ml-[12px]"><use href="#caret"/></svg>
      <svg class="w-[12px] h-[17px] ml-[28px]"><use href="#lock"/></svg>
      <span class="w-[58px] ml-[6px]">Doctor 3</span>
      <svg class="w-[8px] h-[4px] ml-[12px]"><use href="#caret"/></svg>
      <svg class="w-[12px] h-[17px] ml-[28px]"><use href="#lock"/></svg>
      <span class="w-[59px] ml-[7px]">Doctor 4</span>
      <svg class="w-[8px] h-[4px] ml-[12px]"><use href="#caret"/></svg>
      <svg class="w-[12px] h-[17px] ml-[28px]"><use href="#lock"/></svg>
      <span class="w-[59px] ml-[6px]">Doctor 5</span>
      <svg class="w-[8px] h-[4px] ml-[12px]"><use href="#caret"/></svg>
      <svg class="w-[12px] h-[17px] ml-[28px]"><use href="#lock"/></svg>
      <span class="w-[43px] ml-[6px] overflow-hidden border-r border-[#c7c7c7]">Doctor 6</span>
      <svg class="w-[8px] h-[13px] ml-[19px]" viewBox="0 0 8 13"><path d="M7 1L1.500 6.500 7 12" fill="none" stroke="#b5b5b5" stroke-width="1.300"/></svg>
      <svg class="w-[8px] h-[13px] ml-[31px]" viewBox="0 0 8 13"><path d="M1 1l5.500 5.500L1 12" fill="none" stroke="#444746" stroke-width="1.300"/></svg>
      <svg class="w-[8px] h-[13px] ml-[134px]" viewBox="0 0 8 13"><path d="M7 1L1.500 6.500 7 12" fill="none" stroke="#444746" stroke-width="1.300"/></svg>
    </div>
  </div>
</div>
</body>
</html>
